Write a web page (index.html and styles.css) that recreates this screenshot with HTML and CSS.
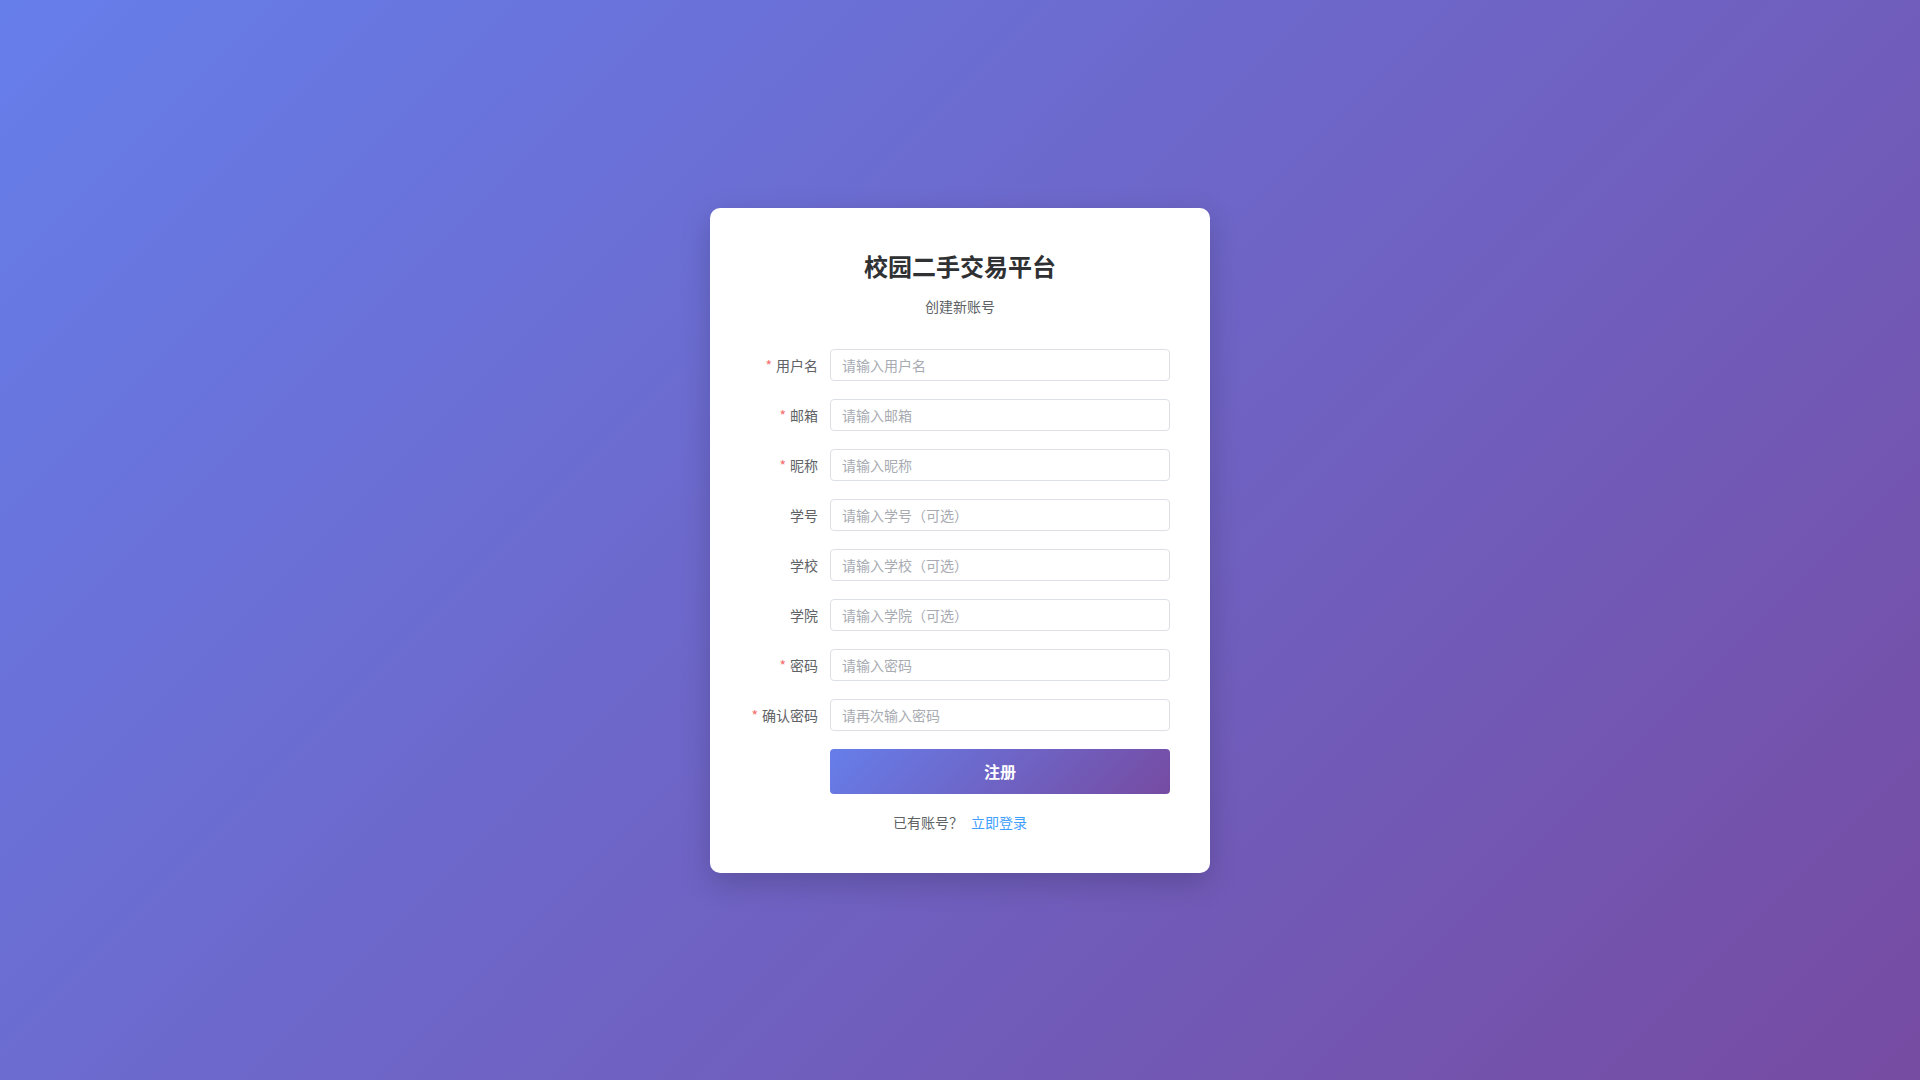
FILE: index.html
```html
<!DOCTYPE html>
<html lang="zh-CN">
<head>
<meta charset="utf-8">
<title>校园二手交易平台 - 注册</title>
<link rel="stylesheet" href="styles.css">
</head>
<body>
<div class="page">
  <div class="card">
    <h2 class="title">校园二手交易平台</h2>
    <p class="subtitle">创建新账号</p>
    <form class="form">
      <div class="item"><label class="label"><span class="req">*</span>用户名</label><div class="control"><input class="input" placeholder="请输入用户名"></div></div>
      <div class="item"><label class="label"><span class="req">*</span>邮箱</label><div class="control"><input class="input" placeholder="请输入邮箱"></div></div>
      <div class="item"><label class="label"><span class="req">*</span>昵称</label><div class="control"><input class="input" placeholder="请输入昵称"></div></div>
      <div class="item"><label class="label">学号</label><div class="control"><input class="input" placeholder="请输入学号（可选）"></div></div>
      <div class="item"><label class="label">学校</label><div class="control"><input class="input" placeholder="请输入学校（可选）"></div></div>
      <div class="item"><label class="label">学院</label><div class="control"><input class="input" placeholder="请输入学院（可选）"></div></div>
      <div class="item"><label class="label"><span class="req">*</span>密码</label><div class="control"><input class="input" type="password" placeholder="请输入密码"></div></div>
      <div class="item"><label class="label"><span class="req">*</span>确认密码</label><div class="control"><input class="input" type="password" placeholder="请再次输入密码"></div></div>
      <div class="item"><span class="label"></span><div class="control"><button type="button" class="btn">注册</button></div></div>
    </form>
    <div class="footer"><span>已有账号？</span><a class="link" href="#">立即登录</a></div>
  </div>
</div>
</body>
</html>
```

FILE: styles.css
```css
* { box-sizing: border-box; }
html, body { margin: 0; padding: 0; }
body {
  font-family: "Noto Sans CJK SC", "Noto Sans", sans-serif;
  color: #606266;
}
.page {
  width: 100%;
  height: 100vh;
  display: flex;
  align-items: center;
  justify-content: center;
  background: linear-gradient(135deg, #667eea 0%, #764ba2 100%);
}
.card {
  width: 500px;
  padding: 40px;
  background: #fff;
  border-radius: 10px;
  box-shadow: 0 10px 30px rgba(0, 0, 0, 0.18);
}
.title {
  margin: 0 0 12px;
  text-align: center;
  font-size: 24px;
  line-height: 36px;
  font-weight: 700;
  color: #303133;
}
.subtitle {
  margin: 0 0 32px;
  text-align: center;
  font-size: 14px;
  line-height: 21px;
  color: #606266;
}
.form { margin: 0; }
.item {
  display: flex;
  margin-bottom: 18px;
}
.label {
  width: 80px;
  flex: none;
  padding-right: 12px;
  text-align: right;
  font-size: 14px;
  line-height: 32px;
  color: #606266;
}
.req {
  color: #f56c6c;
  margin-right: 4px;
}
.control { flex: 1; }
.input {
  display: block;
  width: 100%;
  height: 32px;
  padding: 0 11px;
  border: 1px solid #dcdfe6;
  border-radius: 4px;
  font-family: inherit;
  font-size: 14px;
  color: #606266;
  outline: none;
  background: #fff;
}
.input::placeholder { color: #a8abb2; }
.btn {
  display: block;
  width: 100%;
  height: 45px;
  border: none;
  border-radius: 4px;
  background: linear-gradient(135deg, #667eea 0%, #764ba2 100%);
  color: #fff;
  font-family: inherit;
  font-size: 16px;
  font-weight: 700;
  cursor: pointer;
}
.footer {
  margin-top: 2px;
  text-align: center;
  font-size: 14px;
  line-height: 21px;
  color: #606266;
}
.link {
  margin-left: 8px;
  color: #409eff;
  text-decoration: none;
}
```
